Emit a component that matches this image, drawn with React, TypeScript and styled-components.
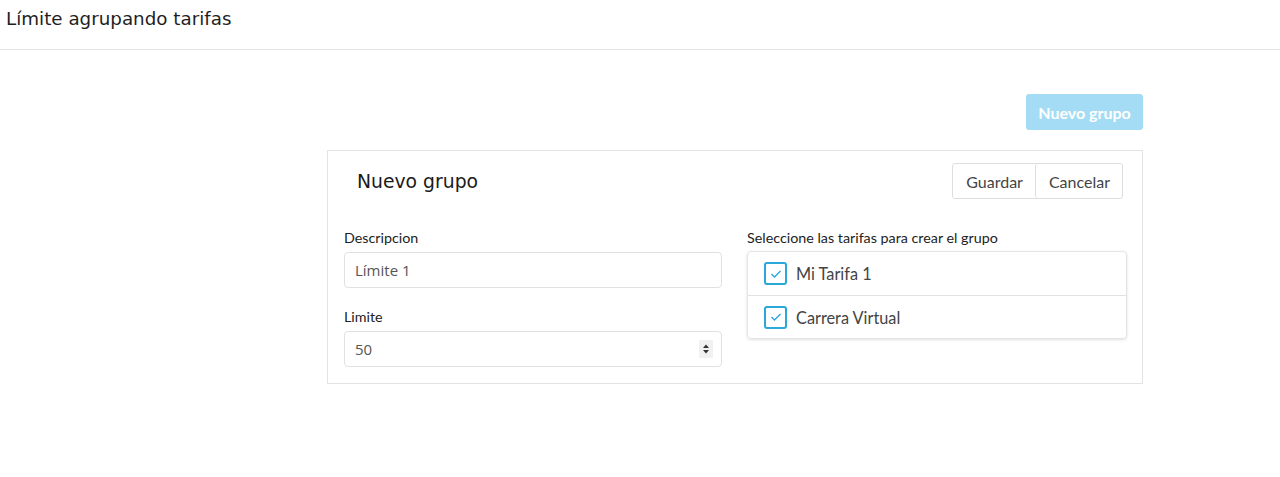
import React from "react";
import styled, { createGlobalStyle } from "styled-components";

const Global = createGlobalStyle`
  html, body { margin: 0; padding: 0; background: #fff; }
  body { font-family: Lato, "Liberation Sans", sans-serif; color: #333; }
  * { box-sizing: border-box; }
`;

const TopBar = styled.header`
  height: 50px;
  border-bottom: 1px solid #e3e3e3;
  display: flex;
  align-items: flex-start;
  padding: 7px 6px 0;
`;

const PageTitle = styled.h1`
  margin: 0;
  font-family: "DejaVu Sans", sans-serif;
  font-weight: 400;
  font-size: 18.3px;
  color: #1f1f1f;
  line-height: 24px;
`;

const Main = styled.main`
  width: 816px;
  margin: 44px 0 0 327px;
  display: flex;
  flex-direction: column;
`;

const Toolbar = styled.div`
  display: flex;
  justify-content: flex-end;
  margin-bottom: 20px;
`;

const PrimaryButton = styled.button`
  height: 36px;
  width: 117px;
  border: none;
  border-radius: 3px;
  background: #a3dcf4;
  color: #fff;
  font-family: Lato, sans-serif;
  font-weight: 700;
  font-size: 16px;
  padding: 0;
`;

const Card = styled.section`
  border: 1px solid #e3e3e3;
  padding: 12px 15px 16px 16px;
`;

const CardHeader = styled.div`
  display: flex;
  align-items: center;
  justify-content: space-between;
  padding-left: 13px;
  margin-bottom: 30px;
`;

const CardTitle = styled.h2`
  margin: 0;
  font-family: "DejaVu Sans", sans-serif;
  font-weight: 400;
  font-size: 18.8px;
  color: #1a1a1a;
`;

const ButtonGroup = styled.div`
  display: flex;
  border: 1px solid #dedede;
  border-radius: 3px;
  height: 36px;
  margin-right: 4px;
`;

const GroupButton = styled.button<{ first?: boolean }>`
  background: #fff;
  border: none;
  border-left: ${(p) => (p.first ? "none" : "1px solid #dedede")};
  font-family: Lato, sans-serif;
  font-size: 16px;
  color: #444;
  padding: 0 12px 0 13px;
  border-radius: 3px;
`;

const Columns = styled.div`
  display: grid;
  grid-template-columns: 378px 380px;
  column-gap: 25px;
`;

const Column = styled.div`
  display: flex;
  flex-direction: column;
`;

const Label = styled.label`
  font-family: Lato, sans-serif;
  font-size: 14.3px;
  color: #222;
  line-height: 17px;
  margin-bottom: 6px;
  display: block;
`;

const Field = styled.div`
  margin-bottom: 20px;
  &:last-child { margin-bottom: 0; }
`;

const InputBox = styled.div`
  height: 36px;
  border: 1px solid #e1e1e1;
  border-radius: 4px;
  display: flex;
  align-items: center;
  padding: 0 10px;
  font-family: "Open Sans", sans-serif;
  font-size: 15px;
  color: #555;
`;

const InputValue = styled.span`
  flex: 1;
`;

const Spinner = styled.div`
  width: 14px;
  height: 18px;
  background: #f1f1f1;
  display: flex;
  align-items: center;
  justify-content: center;
  margin-right: -2px;
`;

const ListBox = styled.div`
  border: 1px solid #e4e4e4;
  border-radius: 4px;
  box-shadow: 0 1px 3px rgba(0, 0, 0, 0.12);
  margin-top: -1px;
`;

const ListRow = styled.div`
  height: 43px;
  display: flex;
  align-items: center;
  padding-left: 16px;
  & + & { border-top: 1px solid #e2e2e2; }
`;

const Check = styled.span`
  width: 23px;
  height: 23px;
  border: 2px solid #29a8d9;
  border-radius: 3px;
  display: flex;
  align-items: center;
  justify-content: center;
  margin-right: 9px;
`;

const RowText = styled.span`
  font-family: Lato, sans-serif;
  font-size: 16.3px;
  color: #444;
`;

const tarifas = ["Mi Tarifa 1", "Carrera Virtual"];

export default function App() {
  return (
    <>
      <Global />
      <TopBar>
        <PageTitle>Límite agrupando tarifas</PageTitle>
      </TopBar>
      <Main>
        <Toolbar>
          <PrimaryButton>Nuevo grupo</PrimaryButton>
        </Toolbar>
        <Card>
          <CardHeader>
            <CardTitle>Nuevo grupo</CardTitle>
            <ButtonGroup>
              <GroupButton first>Guardar</GroupButton>
              <GroupButton>Cancelar</GroupButton>
            </ButtonGroup>
          </CardHeader>
          <Columns>
            <Column>
              <Field>
                <Label>Descripcion</Label>
                <InputBox>
                  <InputValue>Límite 1</InputValue>
                </InputBox>
              </Field>
              <Field>
                <Label>Limite</Label>
                <InputBox>
                  <InputValue>50</InputValue>
                  <Spinner>
                    <svg width="8" height="12" viewBox="0 0 8 12">
                      <path d="M4 1.5 L7 5 H1 Z" fill="#333" />
                      <path d="M4 10.5 L7 7 H1 Z" fill="#333" />
                    </svg>
                  </Spinner>
                </InputBox>
              </Field>
            </Column>
            <Column>
              <Label>Seleccione las tarifas para crear el grupo</Label>
              <ListBox>
                {tarifas.map((t) => (
                  <ListRow key={t}>
                    <Check>
                      <svg width="12" height="10" viewBox="0 0 12 10">
                        <path d="M1.5 5 L4.5 8 L10.5 2" fill="none" stroke="#29a8d9" strokeWidth="1.4" />
                      </svg>
                    </Check>
                    <RowText>{t}</RowText>
                  </ListRow>
                ))}
              </ListBox>
            </Column>
          </Columns>
        </Card>
      </Main>
    </>
  );
}
